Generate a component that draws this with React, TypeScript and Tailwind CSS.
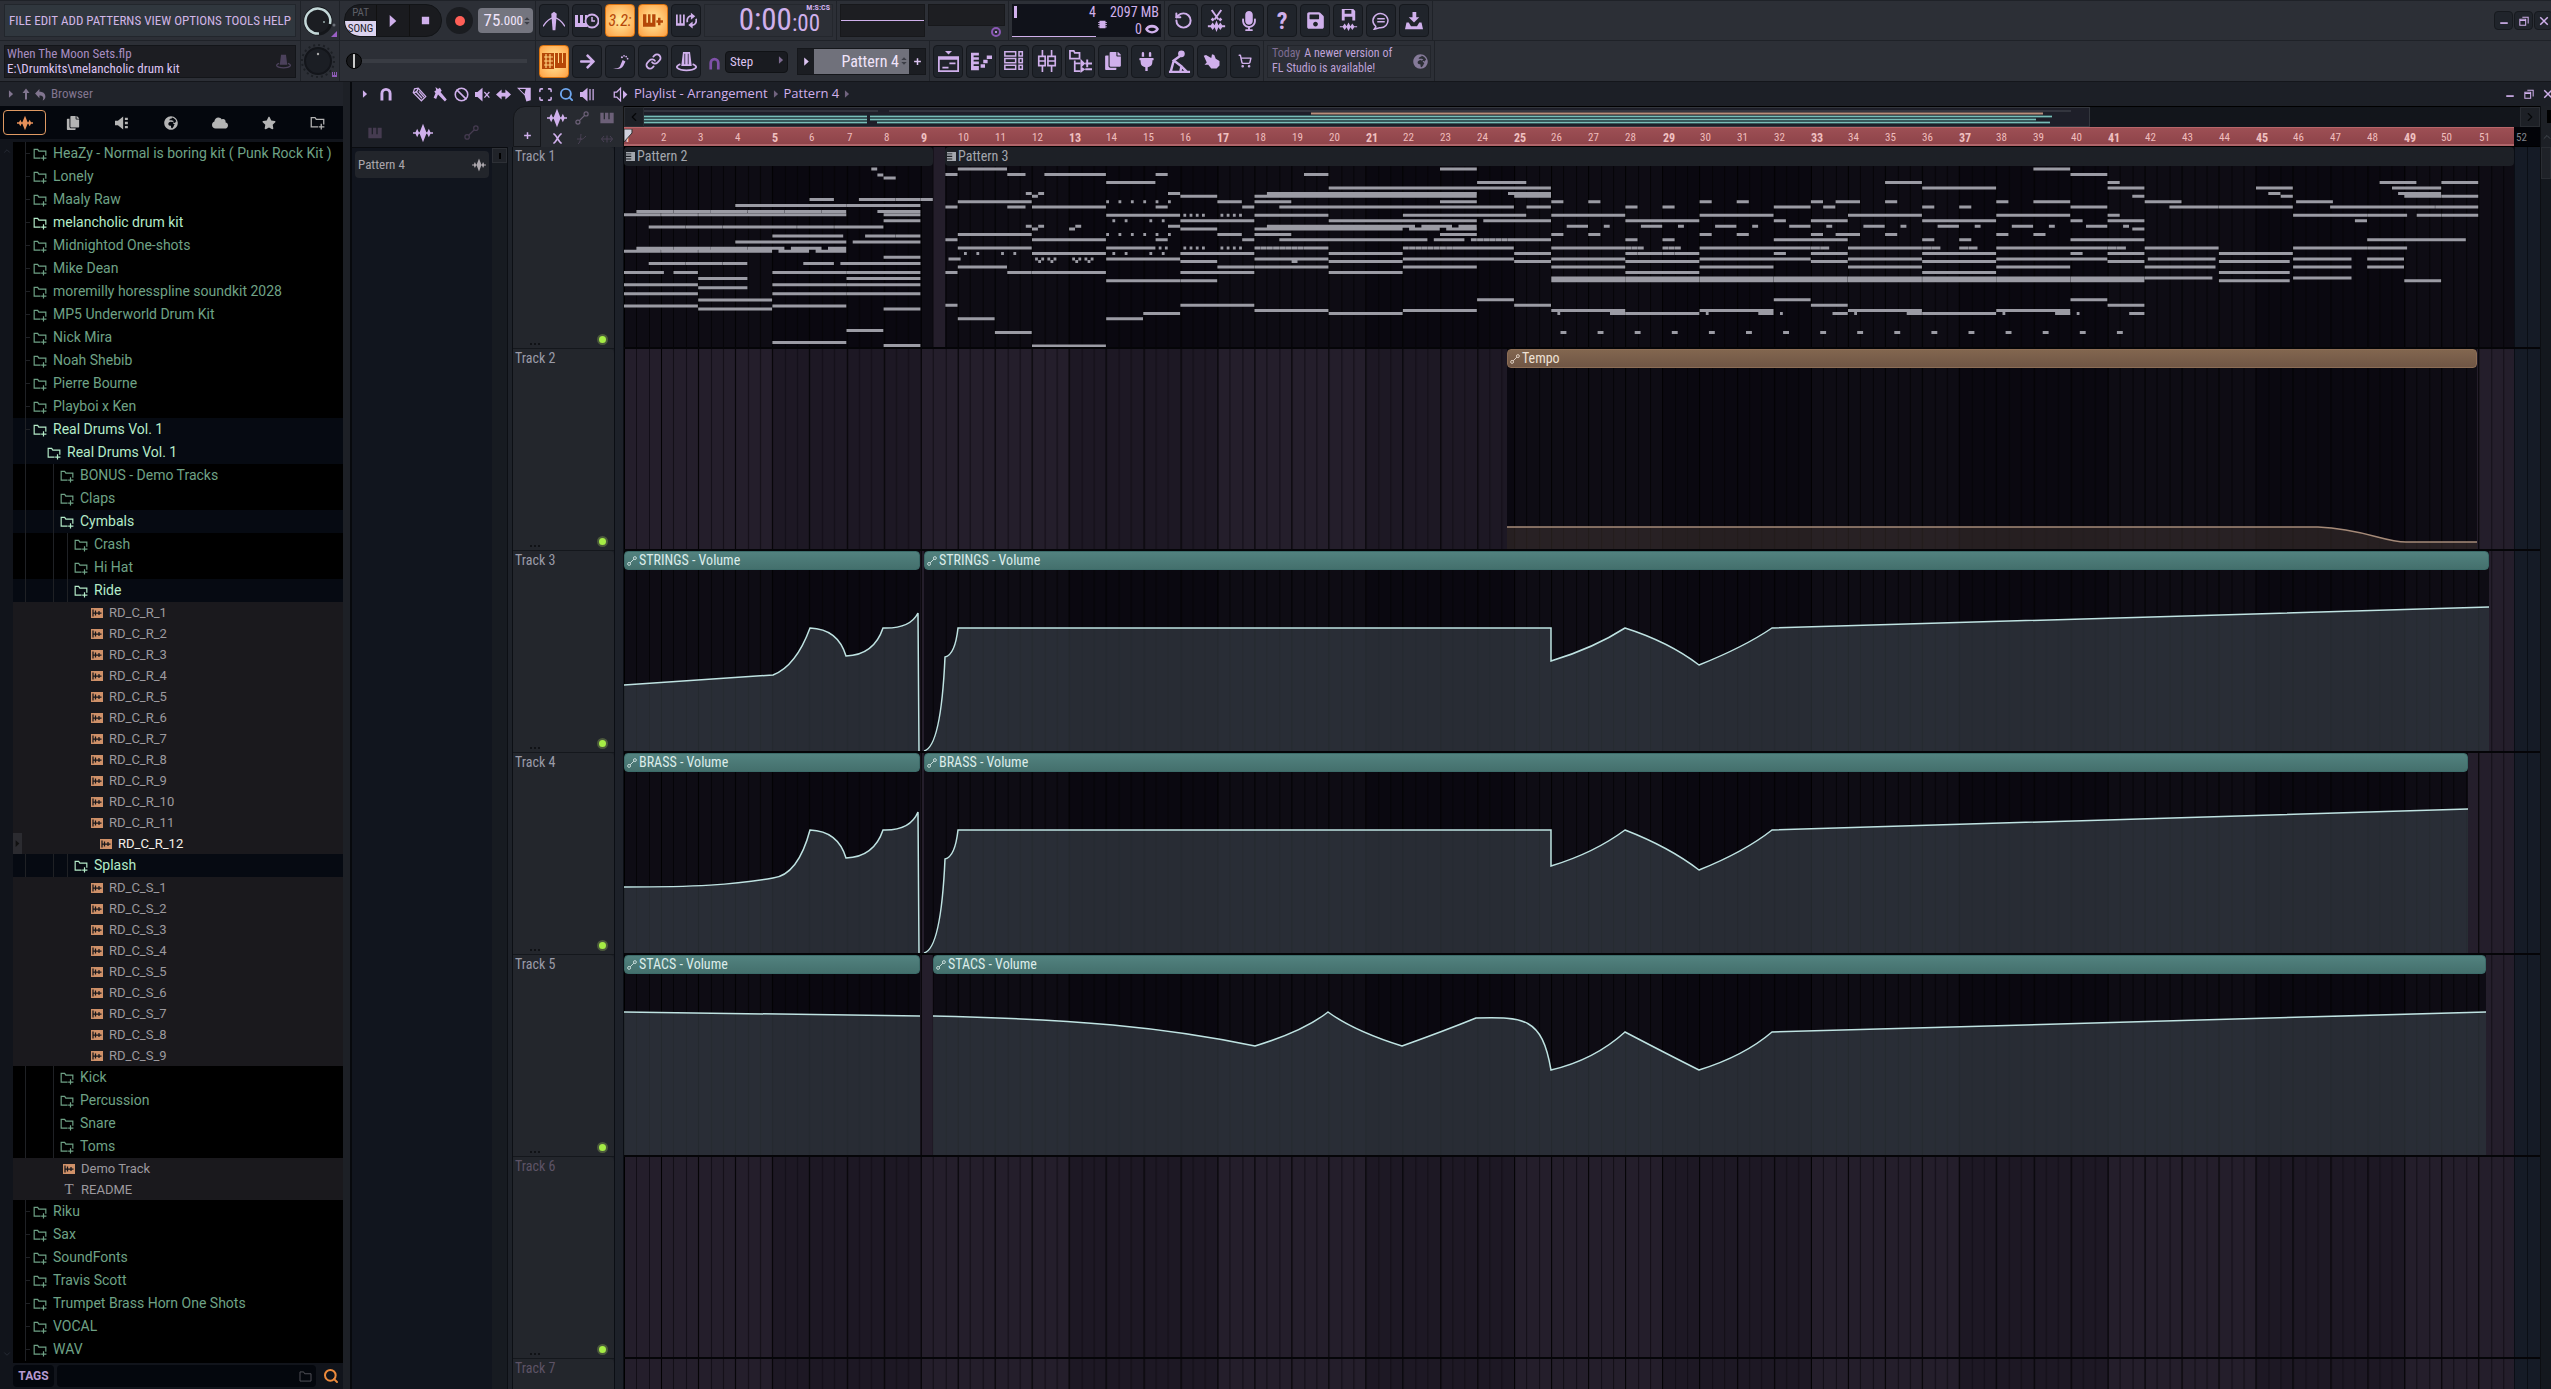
import type { ReactNode } from 'react';
import {
  Ban,
  ChevronDown,
  ChevronLeft,
  ChevronRight,
  ChevronUp,
  Link,
  RotateCcw,
  Scan,
  Search,
  ShoppingCart,
} from 'lucide-react';
import { FaArrowRight, FaCloud, FaGlobeAfrica, FaMicrophone, FaPlug, FaSave, FaStar, FaCopy } from 'react-icons/fa';

// Timeline geometry: one bar is 12 units wide, the song ends at bar 52
const BAR = 37.09;
const UNIT = BAR / 12;
const SONG_END = 1890;
const TRACK_HEIGHT = 202;

/* ---------- Icons ---------- */

const shapes: Record<string, ReactNode> = {
  piano: <path d="M2 4h5v10h2V4h5v10h2V4h6v16H2z" />,
  wave: <path d="M0 11h3l2-4 2 4h1l4-10 4 10h1l2-4 2 4h3v2h-3l-2 4-2-4h-1l-4 10-4-10H7l-2 4-2-4H0z" />,
  automation: (
    <g fill="none" stroke="currentColor" strokeWidth="2">
      <circle cx="5" cy="19" r="3.5" />
      <circle cx="19" cy="5" r="3.5" />
      <path d="M7.500 16.500l9-9" />
    </g>
  ),
  play: <path d="M7 3l10 9-10 9z" />,
  stop: <path d="M4 4h16v16H4z" />,
  metronome: (
    <>
      <path d="M9 4l3-2 3 2-1.500 18h-3z" />
      <path d="M0 18C3 13 6 9 12 8c6 1 9 5 12 10" fill="none" stroke="currentColor" strokeWidth="1.500" />
    </>
  ),
  pianoClock: (
    <>
      <path d="M0 6h3v8h2V6h3v8h2V6h2v12H0z" />
      <circle cx="17" cy="12" r="6.500" fill="#20242b" stroke="currentColor" strokeWidth="1.800" />
      <path d="M17 8v4h3" fill="none" stroke="currentColor" strokeWidth="1.500" />
    </>
  ),
  pianoPlus: <path d="M0 4h4v10h2V4h3v10h2V4h4v15H0zM18 8h3v3h3v3h-3v3h-3v-3h-2v-3h2z" />,
  pianoLoop: (
    <>
      <path d="M0 5h2v10h2V5h2v10h2V5h2v13H0z" />
      <path d="M13 14c-1-5 2-8 6-7M23 10c1 5-2 8-6 7" fill="none" stroke="currentColor" strokeWidth="2" />
      <path d="M17 3l5 4-5 4zM19 13l-5 4 5 4z" />
    </>
  ),
  stepPiano: (
    <>
      <path d="M0 4h12v16H0z" />
      <path d="M2 8h9M2 12h9M2 16h9M4 5v14M8 5v14" stroke="#ffcf7d" strokeWidth="1.200" />
      <path d="M13 4h3v10h1V4h3v10h1V4h3v15H13z" />
    </>
  ),
  slide: (
    <>
      <path d="M1 21c6 2 10 0 11-4l3-7 4 2-3 6c-3 5-9 6-15 3z" />
      <circle cx="14" cy="6" r="1.500" />
      <circle cx="17" cy="4" r="1.200" />
      <circle cx="20" cy="5" r="1.200" />
      <circle cx="22" cy="8" r="1.200" />
    </>
  ),
  hat: (
    <>
      <path d="M8 1h8l2 16H6z" />
      <path d="M10 3v12M14 3v12" stroke="#4c425c" strokeWidth="1.200" />
      <path d="M5 15c-8 3-3 7 7 7s15-4 7-7" fill="none" stroke="currentColor" strokeWidth="2" />
    </>
  ),
  magnet: (
    <path d="M5 23V11a7 7 0 0114 0v12" fill="none" stroke="currentColor" strokeWidth="5" />
  ),
  pencil: (
    <g fill="none" stroke="currentColor" strokeWidth="2">
      <path d="M2 9l2-6 6-1 12 13-7 7z" />
      <path d="M2 9c4 0 7-3 8-7M7 8l9 10M11 7l8 9" />
    </g>
  ),
  brush: <path d="M4 0l4 3 3-2 3 5-2 2 10 12-3 3L8 12l-3 7-4-2 3-7-2-3 3-2z" />,
  mute: (
    <>
      <path d="M0 8h4l8-7v22l-8-7H0z" />
      <path d="M15 8l8 9M23 8l-8 9" stroke="currentColor" strokeWidth="2" />
    </>
  ),
  slip: <path d="M0 12l9-8v5h6V4l9 8-9 8v-5H9v5z" />,
  slice: <path d="M0 1h22v20l-7 2-3-10zM4 3l8 8 2-8z" fillRule="evenodd" />,
  preview: <path d="M0 8h4l8-7v22l-8-7H0zM15 3h2v18h-2zM20 3h2v18h-2z" />,
  plugin: <path d="M0 8h5l9-7v22l-9-7H0zM17 3h5v4h-5zM17 10h5v4h-5zM17 17h5v4h-5z" />,
  speaker: (
    <>
      <path d="M2 8h4l6-6v20l-6-6H2z" fill="none" stroke="currentColor" strokeWidth="2" />
      <path d="M16 5l7 7-7 7z" />
    </>
  ),
  folderPlus: (
    <path d="M13 19H2V4h6l2 3h12v8M18 14v9M14 19h9" fill="none" stroke="currentColor" strokeWidth="2" />
  ),
  sample: (
    <>
      <path d="M0 2h24v20H0z" />
      <path d="M4 5v14M4 12h17M9 7v10M16 8v8" stroke="#17161b" strokeWidth="2.500" />
    </>
  ),
  cutWave: (
    <>
      <path d="M7 1l7 10M17 1l-7 10" stroke="currentColor" strokeWidth="2" />
      <path d="M3 17h3l2-3 2 3 2-5 2 5 2-3 2 3h3v2h-3l-2 3-2-3-2 5-2-5-2 3-2-3H3z" />
      <path d="M9 10l-2 2M15 10l2 2" stroke="currentColor" strokeWidth="3" />
    </>
  ),
  saveWave: (
    <>
      <path d="M5 0h12l2 2v10H5zM8 1v4h7V1zM8 8v4h8V8z" fillRule="evenodd" />
      <path d="M3 18h3l2-3 2 3 2-4 2 4 2-3 2 3h3v1h-3l-2 3-2-3-2 4-2-4-2 3-2-3H3z" />
    </>
  ),
  message: (
    <>
      <path d="M5 20l-2 3 7-2a10 9.500 0 10-5-2z" fill="none" stroke="currentColor" strokeWidth="2" />
      <path d="M7 9h10M7 13h10" stroke="currentColor" strokeWidth="2" />
    </>
  ),
  download: <path d="M10 0h5v7h4l-7 7-7-7h5zM2 14h3l3 5h8l3-5h3l2 9H0z" />,
  playlist: (
    <>
      <path d="M8 0h8l-4 4z" />
      <path d="M1 7h22v16H1z" fill="none" stroke="currentColor" strokeWidth="2" />
      <path d="M1 7h22v3H1zM13 13h7v2h-7zM5 18h7v2H5z" />
    </>
  ),
  pianoRoll: <path d="M0 2h9v3H3v2h6v3H3v2h6v3H3v2h6v5H0zM11 15h5v4h-5zM14 10h5v4h-5zM18 5h6v4h-6z" />,
  rack: (
    <g fill="none" stroke="currentColor" strokeWidth="1.800">
      <path d="M1 1h13v5H1zM1 9h13v5H1zM1 17h13v5H1zM18 1h4v5h-4zM18 9h4v5h-4zM18 17h4v5h-4z" />
    </g>
  ),
  mixer: (
    <g fill="none" stroke="currentColor" strokeWidth="1.800">
      <path d="M7 0v7M17 0v7M7 17v7M17 17v7M3 7h7v10H3zM13 7h8v10h-8zM3 12h7M13 12h8" />
    </g>
  ),
  tree: (
    <>
      <path d="M1 1h4l1 2h5v6H1zM6 11v11h6M6 14h6" fill="none" stroke="currentColor" strokeWidth="1.800" />
      <path d="M12 9v10l5-5zM12 17v7l5-4zM17 13h7v2h-7zM17 19h7v2h-7zM18 10h2v8h-2z" />
    </>
  ),
  lamp: (
    <>
      <circle cx="14" cy="4" r="3.500" />
      <path d="M13 6l-7 5 8 6-1 5M6 11l-3 11M1 23h22M14 17l6 6" fill="none" stroke="currentColor" strokeWidth="2.500" />
    </>
  ),
  hand: <path d="M1 5l3-1 7 4 1-5 3 1 2 5 5 3v6l-4 4-7 0-4-5-5 0 3-3z" />,
  mask: <path d="M0 12c4-10 20-10 24 0-4 10-20 10-24 0zm5 0c4 5 10 5 14 0-4-3-10-3-14 0z" fillRule="evenodd" />,
  chip: <path d="M4 2h16v20H4zM0 5h24v2H0zM0 11h24v2H0zM0 17h24v2H0z" />,
  restore: (
    <g fill="none" stroke="currentColor" strokeWidth="2.500">
      <path d="M2 8h14v14H2zM8 3h14v15M2 11h14" />
    </g>
  ),
  minimize: <path d="M3 15h18v4H3z" />,
  close: <path d="M3 3l18 18M21 3L3 21" stroke="currentColor" strokeWidth="3.500" />,
  plus: <path d="M12 3v18M3 12h18" stroke="currentColor" strokeWidth="4" />,
  up: <path d="M12 1l7 9h-5v13h-4V10H5z" />,
  undo: <path d="M10 2v5c8 0 11 4 11 9 0 3-2 6-5 7 3-6 0-9-6-9v5L2 10z" />,
  clip: <path d="M0 0h24v24H0v-4h14v-3H0v-4h14v-3H0V6h14V4H0z" />,
  curve: <path d="M4 22c6-4 5-14 6-20M2 12h10M9 13c5 0 8-4 11-7" fill="none" stroke="currentColor" strokeWidth="2" />,
  width: <path d="M1 12h22M6 6l-5 6 5 6M18 6l5 6-5 6M12 5v14" fill="none" stroke="currentColor" strokeWidth="2" />,
  crossed: <path d="M3 2c6 0 12 20 18 20M21 2C15 2 9 22 3 22" fill="none" stroke="currentColor" strokeWidth="3.500" />,
  spinner: <path d="M12 1l8 8H4zM12 23l8-8H4z" />,
};

const Icon = ({ name, className }: { name: string; className: string }) => (
  <svg viewBox="0 0 24 24" fill="currentColor" aria-hidden="true" className={`shrink-0 ${className}`}>
    {shapes[name]}
  </svg>
);

/* ---------- Top toolbar ---------- */

const menuItems = ['FILE', 'EDIT', 'ADD', 'PATTERNS', 'VIEW', 'OPTIONS', 'TOOLS', 'HELP'];

const ToolButton = ({ label, lit, children }: { label: string; lit?: boolean; children: ReactNode }) => (
  <button
    aria-label={label}
    className={`flex h-[33px] w-[30px] shrink-0 items-center justify-center rounded-sm border ${
      lit
        ? 'border-[#d9720f] bg-radial from-[#ffeb9e] to-[#ff9f3f] text-[#b54708]'
        : 'border-[#15181d] bg-[#20242b] text-[#d0b0ec]'
    }`}
  >
    {children}
  </button>
);

const Section = ({ className, children }: { className: string; children?: ReactNode }) => (
  <div className={`flex h-full shrink-0 items-center border-r border-[#1f2228] ${className}`}>{children}</div>
);

const Knob = ({ ring }: { ring?: boolean }) => (
  <svg viewBox="0 0 38 38" className="h-[38px] w-[38px]">
    {ring ? (
      <>
        <circle cx="17" cy="19" r="13" fill="#1b1d22" stroke="#14161a" strokeWidth="3" />
        <path d="M18 31.500A12.500 12.500 0 1129 22" fill="none" stroke="#c3d7d8" strokeWidth="2.500" />
        <circle cx="23" cy="20" r="1" fill="#9aa" />
        <circle cx="33" cy="23" r="1.500" fill="#6b7078" />
        <path d="M36 29v6h-6z" fill="#9a5fc4" />
      </>
    ) : (
      <>
        <circle cx="17" cy="19" r="16" fill="none" stroke="#1c1f24" strokeWidth="2" strokeDasharray="2 3" />
        <circle cx="17" cy="19" r="13" fill="#1b1e24" stroke="#13151a" strokeWidth="2" />
        <circle cx="17" cy="12" r="1.200" fill="#aaa" />
        <path d="M31 30h1v3h1v-3h1v3h1v-3h1v5h-5z" fill="#8d5ab5" />
      </>
    )}
  </svg>
);

const WindowButtons = () => (
  <div className="-mr-0.5 ml-auto flex gap-px text-[#d0b0ec]">
    {['minimize', 'restore', 'close'].map((name) => (
      <button
        key={name}
        aria-label={name}
        className="flex h-[19px] w-[19px] items-center justify-center rounded-sm border border-[#16191e] bg-[#20242b]"
      >
        <Icon name={name} className="size-[10px]" />
      </button>
    ))}
  </div>
);

const TopRow = () => (
  <div className="flex h-[41px] items-center border-t border-b border-[#1f2228]">
    <Section className="w-[301px] px-1">
      <nav className="flex h-[33px] w-full items-center justify-between border border-[#22262c] bg-[#30373e] px-1 text-[13px] text-[#d0b5e6]">
        {menuItems.map((item) => (
          <button key={item}>{item}</button>
        ))}
      </nav>
    </Section>
    <Section className="w-[39px]">
      <Knob ring />
    </Section>
    <Section className="w-[196px] pl-1">
      <div className="flex h-[33px] w-[98px] overflow-hidden rounded-2xl border border-[#121417] bg-[#1a1b1f]">
        <button className="flex w-[31px] flex-col text-center text-[11px] leading-4">
          <span className="text-[#5d5f66]">PAT</span>
          <span className="h-4 bg-[#dcd3ef] text-[#23222a]">SONG</span>
        </button>
        <button aria-label="Play" className="flex flex-1 items-center justify-center border-l border-[#111] text-[#d0b0ec]">
          <Icon name="play" className="size-[16px]" />
        </button>
        <button aria-label="Stop" className="flex flex-1 items-center justify-center border-l border-[#111] text-[#d0b0ec]">
          <Icon name="stop" className="size-[11px]" />
        </button>
      </div>
      <button aria-label="Record" className="ml-1 flex size-[27px] items-center justify-center rounded-full bg-[#1a1c20]">
        <span className="size-[10px] rounded-full bg-[#ff5f57]" />
      </button>
      <button className="ml-[5px] flex h-[25px] w-[55px] items-center justify-end rounded bg-[#74757f] pr-0.5 text-[#f0e4fa]">
        <span className="text-[17px]">75</span>
        <span className="text-[13px]">.000</span>
        <Icon name="spinner" className="size-[8px] text-[#3c3e46]" />
      </button>
    </Section>
    <Section className="gap-[3px] pr-[3px] pl-[3px]">
      <ToolButton label="Metronome"><Icon name="metronome" className="size-[22px]" /></ToolButton>
      <ToolButton label="Wait for input"><Icon name="pianoClock" className="size-[24px]" /></ToolButton>
      <ToolButton label="Countdown" lit>
        <span className="text-[16px] italic">3.2:</span>
      </ToolButton>
      <ToolButton label="Blend notes" lit><Icon name="pianoPlus" className="size-[20px]" /></ToolButton>
      <ToolButton label="Loop recording"><Icon name="pianoLoop" className="size-[21px]" /></ToolButton>
      <div className="flex h-[33px] w-[129px] items-end justify-end border border-[#24272d] bg-[#2c2f36] pr-[12px] text-[#d0b0ec]">
        <span className="text-[31px] leading-8">0:00</span>
        <div className="flex flex-col">
          <span className="-mr-[10px] text-right text-[8px] leading-2 font-bold">M:S:CS</span>
          <span className="text-[23px] leading-6">:00</span>
        </div>
      </div>
    </Section>
    <Section className="gap-[3px] px-[3px]">
      <div className="flex h-[33px] w-[85px] items-center border border-[#17181b] bg-[#1d1e22]">
        <div className="h-px w-full bg-[#d0b0ec]" />
      </div>
      <div className="flex h-[33px] w-[77px] flex-col items-end">
        <div className="h-[24px] w-full border border-[#17181b] bg-[#1d1e22]" />
        <span className="mt-px mr-1 flex size-[10px] items-center justify-center rounded-full border-2 border-[#8a58b4] bg-[#2b2e35]">
          <span className="size-0.5 bg-[#b98be0]" />
        </span>
      </div>
    </Section>
    <Section className="px-[3px]">
      <div className="flex h-[33px] w-[149px] bg-[#10121a] text-[14px] leading-4 text-[#d0b0ec]">
        <div className="flex w-[84px] flex-col justify-between border-b border-[#d0b0ec]">
          <div className="flex items-center justify-between pl-0.5">
            <span className="h-[12px] w-[3px] bg-[#d0b0ec]" />
            <span>4</span>
          </div>
        </div>
        <div className="flex flex-1 flex-col items-end pr-0.5">
          <span>2097 MB</span>
          <span className="flex w-full items-center gap-[3px]">
            <Icon name="chip" className="mr-auto mb-2 ml-0.5 size-[9px]" />0
            <Icon name="mask" className="size-[14px]" />
          </span>
        </div>
      </div>
    </Section>
    <Section className="gap-[3px] px-[3px]">
      <ToolButton label="Undo"><RotateCcw className="size-[19px]" strokeWidth={2.5} /></ToolButton>
      <ToolButton label="Cut"><Icon name="cutWave" className="size-[23px]" /></ToolButton>
      <ToolButton label="Record audio"><FaMicrophone className="size-[20px]" /></ToolButton>
      <ToolButton label="Help"><span className="text-[24px] font-bold leading-6">?</span></ToolButton>
      <ToolButton label="Save"><FaSave className="size-[19px]" /></ToolButton>
      <ToolButton label="Render"><Icon name="saveWave" className="size-[23px]" /></ToolButton>
      <ToolButton label="Feedback"><Icon name="message" className="size-[18px]" /></ToolButton>
      <ToolButton label="Download"><Icon name="download" className="size-[18px]" /></ToolButton>
    </Section>
    <WindowButtons />
  </div>
);

const BottomRow = () => (
  <div className="flex h-[41px] items-center border-b border-[#14161b]">
    <Section className="w-[301px] px-1">
      <div className="flex h-[33px] w-full items-center justify-between border border-[#131519] bg-[#1c1d22] pr-1 pl-0.5">
        <div className="text-[13px] leading-[15px]">
          <p className="text-[#a78cc0]">When The Moon Sets.flp</p>
          <p className="text-[#dcc4f2]">E:\Drumkits\melancholic drum kit</p>
        </div>
        <Icon name="hat" className="size-[15px] text-[#4c425c]" />
      </div>
    </Section>
    <Section className="w-[39px]">
      <Knob />
    </Section>
    <Section className="w-[196px] pr-2 pl-1.5">
      <input
        type="range"
        aria-label="Song position"
        defaultValue={0}
        className="h-4 w-full appearance-none bg-[linear-gradient(#393c43,#393c43)] bg-[length:100%_4px] bg-center bg-no-repeat [&::-webkit-slider-thumb]:size-4 [&::-webkit-slider-thumb]:appearance-none [&::-webkit-slider-thumb]:rounded-full [&::-webkit-slider-thumb]:border [&::-webkit-slider-thumb]:border-black [&::-webkit-slider-thumb]:bg-[linear-gradient(90deg,#17181b_44%,#ccc_44%,#ccc_56%,#17181b_56%)]"
      />
    </Section>
    <Section className="gap-[3px] pr-[3px] pl-[3px]">
      <ToolButton label="Typing keyboard" lit><Icon name="stepPiano" className="size-[24px]" /></ToolButton>
      <ToolButton label="Auto scroll"><FaArrowRight className="size-[17px]" /></ToolButton>
      <ToolButton label="Slide"><Icon name="slide" className="size-[17px]" /></ToolButton>
      <ToolButton label="Link"><Link className="size-[17px]" strokeWidth={2.5} /></ToolButton>
      <ToolButton label="Multilink"><Icon name="hat" className="size-[21px]" /></ToolButton>
      <Icon name="magnet" className="mt-1 ml-1 size-[13px] text-[#7f51a8]" />
      <div className="relative ml-px">
        <select aria-label="Snap" className="h-[22px] w-[63px] appearance-none rounded-sm border border-[#101215] bg-[#191b20] pl-1 text-[13px] text-[#dcc4f2]">
          <option>Step</option>
        </select>
        <Icon name="play" className="absolute top-1.5 right-0.5 size-[10px] text-[#7d6b91]" />
      </div>
      <div className="ml-1.5 flex h-[27px] border border-[#15171b] bg-[#1b1d22] text-[#dcc4f2]">
        <button aria-label="Pattern menu" className="flex w-[16px] items-center justify-center">
          <Icon name="play" className="size-[11px]" />
        </button>
        <div className="relative">
          <input
            aria-label="Pattern"
            defaultValue="Pattern 4"
            className="h-full w-[95px] bg-[#70717b] pr-2.5 text-right text-[16px] text-[#f0e4fa]"
          />
          <Icon name="spinner" className="absolute top-2 right-px size-[8px] text-[#3c3e46]" />
        </div>
        <button aria-label="Add pattern" className="flex w-[16px] items-center justify-center">
          <Icon name="plus" className="size-[9px]" />
        </button>
      </div>
    </Section>
    <Section className="gap-[3px] px-[3px]">
      <ToolButton label="Playlist"><Icon name="playlist" className="size-[21px]" /></ToolButton>
      <ToolButton label="Piano roll"><Icon name="pianoRoll" className="size-[21px]" /></ToolButton>
      <ToolButton label="Channel rack"><Icon name="rack" className="size-[20px]" /></ToolButton>
      <ToolButton label="Mixer"><Icon name="mixer" className="size-[22px]" /></ToolButton>
      <ToolButton label="Browser"><Icon name="tree" className="size-[23px]" /></ToolButton>
      <ToolButton label="Copy"><FaCopy className="size-[18px]" /></ToolButton>
      <ToolButton label="Plugins"><FaPlug className="size-[19px]" /></ToolButton>
      <ToolButton label="Tempo tapper"><Icon name="lamp" className="size-[23px]" /></ToolButton>
      <ToolButton label="Touch"><Icon name="hand" className="size-[18px]" /></ToolButton>
      <ToolButton label="Shop"><ShoppingCart className="size-[14px]" strokeWidth={2.5} /></ToolButton>
    </Section>
    <Section className="px-[3px]">
      <a href="#news" className="flex h-[33px] w-[164px] items-center justify-between border border-[#22252b] pr-0.5 pl-1 text-[12px] leading-[15px] text-[#bfa2d8]">
        <span>
          <span className="mr-1 text-[#7e6d92]">Today</span>A newer version of
          <br />
          FL Studio is available!
        </span>
        <FaGlobeAfrica className="size-[15px] text-[#857a99]" />
      </a>
    </Section>
  </div>
);

/* ---------- Browser ---------- */

type Row = { name: string; level: number; kind?: 'folder' | 'open' | 'sample' | 'text'; bright?: boolean };

const numbered = (prefix: string, from: number, to: number): Row[] =>
  Array.from({ length: to - from + 1 }, (_, i) => ({ name: `${prefix}${from + i}`, level: 4, kind: 'sample' }));

const rows: Row[] = [
  { name: 'HeaZy - Normal is boring kit ( Punk Rock Kit )', level: 0 },
  { name: 'Lonely', level: 0 },
  { name: 'Maaly Raw', level: 0 },
  { name: 'melancholic drum kit', level: 0, bright: true },
  { name: 'Midnightod One-shots', level: 0 },
  { name: 'Mike Dean', level: 0 },
  { name: 'moremilly horesspline soundkit 2028', level: 0 },
  { name: 'MP5 Underworld Drum Kit', level: 0 },
  { name: 'Nick Mira', level: 0 },
  { name: 'Noah Shebib', level: 0 },
  { name: 'Pierre Bourne', level: 0 },
  { name: 'Playboi x Ken', level: 0 },
  { name: 'Real Drums Vol. 1', level: 0, kind: 'open' },
  { name: 'Real Drums Vol. 1', level: 1, kind: 'open' },
  { name: 'BONUS - Demo Tracks', level: 2 },
  { name: 'Claps', level: 2 },
  { name: 'Cymbals', level: 2, kind: 'open' },
  { name: 'Crash', level: 3 },
  { name: 'Hi Hat', level: 3 },
  { name: 'Ride', level: 3, kind: 'open' },
  ...numbered('RD_C_R_', 1, 11),
  { name: 'RD_C_R_12', level: 4, kind: 'sample', bright: true },
  { name: 'Splash', level: 3, kind: 'open' },
  ...numbered('RD_C_S_', 1, 9),
  { name: 'Kick', level: 2 },
  { name: 'Percussion', level: 2 },
  { name: 'Snare', level: 2 },
  { name: 'Toms', level: 2 },
  { name: 'Demo Track', level: 2, kind: 'sample' },
  { name: 'README', level: 2, kind: 'text' },
  { name: 'Riku', level: 0 },
  { name: 'Sax', level: 0 },
  { name: 'SoundFonts', level: 0 },
  { name: 'Travis Scott', level: 0 },
  { name: 'Trumpet Brass Horn One Shots', level: 0 },
  { name: 'VOCAL', level: 0 },
  { name: 'WAV', level: 0 },
];

const folderIndent = ['pl-[3px]', 'pl-[17px]', 'pl-[30px]', 'pl-[44px]'];

const FolderRow = ({ row }: { row: Row }) => {
  const open = row.kind === 'open';
  return (
    <li className={`flex h-[23px] items-center text-[14px] ${open ? 'bg-[#060a12]' : 'bg-black'}`}>
      <span className="ml-3 h-full w-px bg-[#1f2125]" />
      <span className={`h-px w-[4px] ${row.level === 0 ? 'bg-[#1f2125]' : ''}`} />
      {row.level >= 2 && <span className="ml-[23px] -mr-[24px] h-full w-px bg-[#1f2125]" />}
      {row.level === 3 && <span className="ml-[37px] -mr-[38px] h-full w-px bg-[#1f2125]" />}
      <button
        className={`flex items-center gap-1.5 ${folderIndent[row.level]} ${
          open || row.bright ? 'text-[#b5ecc9]' : 'text-[#6fa286]'
        }`}
      >
        <Icon name="folderPlus" className="size-[14px]" />
        {row.name}
      </button>
    </li>
  );
};

const FileRow = ({ row }: { row: Row }) => {
  const selected = row.bright;
  return (
    <li className="flex h-[21px] items-center bg-[#1a191d]">
      <span className={`flex h-full w-[9px] items-center ${selected ? 'bg-[#2b2b30]' : ''}`}>
        {selected && <Icon name="play" className="size-[9px] text-[#111]" />}
      </span>
      <button
        className={`flex items-center gap-1.5 ${row.level === 2 ? 'pl-[41px]' : selected ? 'pl-[78px]' : 'pl-[69px]'} ${
          selected ? 'text-[#f4efe9]' : 'text-[#9d9a9f]'
        }`}
      >
        {row.kind === 'text' ? (
          <span className="w-[12px] text-center font-[family-name:'Liberation_Serif',serif] text-[15px]">T</span>
        ) : (
          <Icon name="sample" className="size-[12px] text-[#cf9068]" />
        )}
        {row.name}
      </button>
    </li>
  );
};

const Browser = () => (
  <aside className="flex w-[343px] shrink-0 flex-col bg-[#11141b]">
    <div className="flex h-[24px] shrink-0 items-center bg-[#20232a] pl-1.5 text-[13px] text-[#81758f]">
      <Icon name="play" className="size-[10px]" />
      <Icon name="up" className="ml-1 size-[12px]" />
      <Icon name="undo" className="ml-0.5 size-[13px]" />
      <span className="ml-1">Browser</span>
    </div>
    <div className="flex h-[33px] shrink-0 items-center bg-[#04070d] text-[#b4b4b4]">
      <button aria-label="All" className="ml-[3px] flex h-[25px] w-[43px] items-center justify-center rounded border border-[#e09a63] text-[#e8915a]">
        <Icon name="wave" className="size-[16px]" />
      </button>
      <button aria-label="Project" className="ml-0.5 flex w-[49px] justify-center"><FaCopy className="size-[14px]" /></button>
      <button aria-label="Plugins" className="flex w-[49px] justify-center"><Icon name="plugin" className="size-[14px]" /></button>
      <button aria-label="Online" className="flex w-[49px] justify-center"><FaGlobeAfrica className="size-[14px]" /></button>
      <button aria-label="Cloud" className="flex w-[49px] justify-center"><FaCloud className="size-[16px]" /></button>
      <button aria-label="Starred" className="flex w-[49px] justify-center"><FaStar className="size-[14px]" /></button>
      <button aria-label="Add folder" className="flex w-[49px] justify-center"><Icon name="folderPlus" className="size-[15px]" /></button>
    </div>
    <div className="mt-[3px] flex min-h-0 flex-1">
      <div className="flex w-[13px] shrink-0 flex-col items-center justify-between py-1 text-[#2a2f38]">
        <ChevronUp className="size-[10px]" />
        <ChevronDown className="size-[10px]" />
      </div>
      <ul className="min-w-0 flex-1 overflow-hidden bg-black font-[family-name:Roboto,sans-serif] text-[13px] whitespace-nowrap">
        {rows.map((row, i) =>
          row.kind === 'sample' || row.kind === 'text' ? <FileRow key={i} row={row} /> : <FolderRow key={i} row={row} />
        )}
      </ul>
    </div>
    <div className="flex h-[26px] shrink-0 items-center gap-[3px] pl-[13px]">
      <label htmlFor="tags" className="flex h-[22px] w-[41px] items-center justify-center rounded bg-[#04070d] font-[family-name:Roboto,sans-serif] text-[12px] font-bold text-[#b79ad2]">
        TAGS
      </label>
      <div className="relative flex-1">
        <input id="tags" className="block h-[22px] w-full rounded bg-[#04070d]" />
        <svg viewBox="0 0 14 12" className="absolute top-[6px] right-1 h-[11px] w-[13px]" fill="none" stroke="#55555c">
          <path d="M1 1h4l1 2h7v8H1z" />
        </svg>
      </div>
      <button aria-label="Search" className="flex w-[24px] justify-center text-[#ee8b3c]">
        <Search className="size-[16px]" strokeWidth={3} />
      </button>
    </div>
  </aside>
);

/* ---------- Playlist ---------- */

// Each line is one pitch: row number, then start-end pairs in timeline units
const pattern2Notes = `
0: 80-82
2: 82-84
3: 84-88
10: 60-68 76-88 88-96 96-100
12: 36-72 72-96
14: 4-16 16-28 28-40 40-52 52-64 64-72 82-96
15: 0-12 12-24 24-72 84-96
17: 84-96
19: 8-20 20-32 32-56 56-68 68-84
22: 48-71 78-88 88-96
24: 36-72 74-96
26: 4-16 16-28 28-40 40-52 54-64 66-72
27: 0-12 12-24 24-48 50-60 62-72
29: 84-96
31: 8-20 20-32 32-40 58-68 70-96
34: 0-13 16-24 48-72 72-96
36: 24-40 72-96
38: 0-24 48-72 72-96
39: 24-40
41: 0-24 48-72 72-96
43: 24-48
45: 0-24 48-72
46: 24-48 84-96
53: 72-84
57: 48-72
58: 84-96`;

const pattern3Notes = `
0: 108-124 264-276 456-468
2: 104-108 124-130 136-156 172-176 220-228 468-480
5: 156-172 276-292 408-420 480-484 568-580 588-600
7: 228-300 420-444 480-492 528-540 572-588
9: 130-132 134-136 176-180 208-276 286-300 532-536 574-588
10: 132-134 180-192 204-276 288-300 488-492 536-540 576-588 588-600
12: 108-132 156-157 160-161 164-165 168-169 172-173 176-177 192-200 204-216 264-276 300-304 312-316 348-352 360-364 384-388 392-400 408-412 444-448 456-468 492-504 541-553
14: 104-108 124-130 132-156 172-176 200-204 212-288 292-300 324-328 336-340 372-384 388-392 420-424 432-436 468-480 500-516 516-540 552-586 586-600
17: 156-180 181-182 183-184 185-186 187-188 193-194 195-196 197-198 199-200 204-228 252-292 300-324 348-372 396-420 444-468 480-484 540-564 564-577 580-588 588-600
19: 158-159 162-163 170-171 174-175 180-204 228-276 278-300 324-348 372-376 384-396 420-444 468-472 480-492 560-564
21: 130-132 134-136 146-148 176-180 208-256 258-268 270-276 305-312 317-319 329-336 341-343 353-360 365-367 377-384 389-391 401-408 413-415 425-432 437-439 449-456 461-463 473-480 485-487
22: 132-134 144-146 180-192 204-252 254-264 266-276 488-492
24: 108-132 156-157 160-161 164-165 168-169 172-173 176-177 192-200 204-216 264-276 300-304 312-316 348-352 360-364 384-388 392-400 408-412 444-448 456-460
26: 104-108 132-156 172-176 200-204 212-260 262-272 274-276 276-278 278-280 280-282 282-284 284-286 286-300 324-328 336-340 372-396 420-424 432-436 468-492 564-596
29: 108-132 156-172 173-174 175-176 181-182 183-184 185-186 187-188 193-194 195-196 197-198 199-200 204-206 206-208 208-210 210-212 212-214 214-216 216-218 218-220 220-228 252-254 254-256 256-258 258-260 260-262 262-264 264-266 266-268 268-288 300-324 324-326 326-328 328-330 336-338 338-340 340-342 348-384 384-387 387-390 396-420 420-423 423-426 432-435 435-438 444-480 480-483 483-486 492-516 540-564 564-577
31: 110-111 114-115 122-123 126-127 132-156 158-159 162-163 170-171 174-175 180-204 228-252 288-300 324-328 328-336 336-340 340-348 372-376 384-396 420-444 468-472 480-492 516-540
33: 105-109 133-134 135-136 137-138 139-140 145-146 147-148 149-150 151-152 156-180 204-228 252-288 300-324 348-384 396-420 444-480 493-515 540-559 564-576
34: 134-135 138-139 146-147 150-151 180-192 216-218 228-252 288-300 324-348 384-396 420-444 480-492 516-539
36: 108-124 192-204 204-228 252-276 300-324 348-372 396-420 444-468 492-515 540-559 564-576
38: 104-108 124-132 132-156 180-204 228-252 324-348 420-444 516-539
40: 300-324 324-348 348-372 372-396 396-420 420-444 444-468 468-492 492-514 540-559
41: 156-180 180-192 300-324 324-348 348-372 372-396 396-420 420-444 444-468 468-492 516-539 576-588
48: 276-288 372-384 468-480
50: 104-108 180-204 288-300 384-396 480-492
52: 204-228 252-276 300-324 348-372 396-420 444-468
53: 168-180 228-252 302-303 319-324 324-348 350-351 367-372 374-375 391-396 398-399 415-420 420-444 446-447 463-468 470-471 487-492
55: 108-120 156-168
60: 120-132 303-305 315-317 327-329 339-341 351-353 363-365 375-377 387-389 399-401 411-413 423-425 435-437 447-449 459-461 471-473 483-485
65: 132-156`;

const notesToPath = (notes: string, pitchHeight: number) =>
  notes
    .trim()
    .split('\n')
    .flatMap((line) => {
      const [pitch, spans] = line.split(': ');
      const y = (20.5 + Number(pitch) * pitchHeight).toFixed(1);
      return spans.split(' ').map((span) => {
        const [from, to] = span.split('-').map(Number);
        return `M${(from * UNIT).toFixed(1)} ${y}h${((to - from) * UNIT - 0.3).toFixed(1)}v3h-${((to - from) * UNIT - 0.3).toFixed(1)}z`;
      });
    })
    .join('');

type Clip = {
  name: string;
  start: number;
  end: number;
  tone: 'pattern' | 'tempo' | 'volume';
  notes?: string;
  curve?: string;
};

// Curves are drawn in track space: x from bar 1, y from the top of the track
const outro = (low: number) =>
  `V${low}Q970 ${low - 13} 1001 77Q1045 ${low - 19} 1075 ${low + 4}Q1120 ${low - 14} 1148 77`;

const tracks: { name: string; dim?: boolean; clips: Clip[] }[] = [
  {
    name: 'Track 1',
    clips: [
      { name: 'Pattern 2', start: 0, end: 309, tone: 'pattern', notes: notesToPath(pattern2Notes, 3.045) },
      { name: 'Pattern 3', start: 321, end: 1890, tone: 'pattern', notes: notesToPath(pattern3Notes, 2.724) },
    ],
  },
  {
    name: 'Track 2',
    clips: [{ name: 'Tempo', start: 883, end: 1853, tone: 'tempo', curve: 'M883 178H1694C1740 180 1760 193 1782 193H1853' }],
  },
  {
    name: 'Track 3',
    clips: [
      {
        name: 'STRINGS - Volume',
        start: 0,
        end: 296,
        tone: 'volume',
        curve: 'M0 134L149 124Q172 115 186 77Q214 78 222 105Q250 104 259 77Q286 78 294 62L295 200',
      },
      {
        name: 'STRINGS - Volume',
        start: 300,
        end: 1865,
        tone: 'volume',
        curve: `M300 200Q317 196 321 106Q331 104 334 77H927${outro(110)}L1865 56`,
      },
    ],
  },
  {
    name: 'Track 4',
    clips: [
      {
        name: 'BRASS - Volume',
        start: 0,
        end: 296,
        tone: 'volume',
        curve: 'M0 134C70 134 110 132 149 125Q174 122 186 77Q214 78 222 105Q250 104 259 77Q286 78 294 59L295 200',
      },
      {
        name: 'BRASS - Volume',
        start: 300,
        end: 1844,
        tone: 'volume',
        curve: `M300 200Q317 196 321 106Q331 104 334 77H927${outro(113)}L1844 56`,
      },
    ],
  },
  {
    name: 'Track 5',
    clips: [
      { name: 'STACS - Volume', start: 0, end: 296, tone: 'volume', curve: 'M0 57L296 61' },
      {
        name: 'STACS - Volume',
        start: 309,
        end: 1862,
        tone: 'volume',
        curve:
          'M309 61C450 64 540 72 631 91Q680 76 704 57Q730 76 778 91Q820 76 852 63C900 62 918 62 927 115Q970 105 1001 77Q1045 100 1075 115Q1120 101 1148 77L1862 57',
      },
    ],
  },
  { name: 'Track 6', dim: true, clips: [] },
  { name: 'Track 7', dim: true, clips: [] },
];

const headerTone = {
  pattern: 'bg-[#1d2026] text-[#a3a7ae]',
  tempo: 'bg-linear-to-b from-[#82664f] to-[#705645] border border-[#8c6d55] text-[#efe2d6]',
  volume: 'bg-linear-to-b from-[#52827f] to-[#44706d] border border-[#3c6b69] text-[#dcecea]',
};

const GridPatterns = () => {
  const lines = Array.from({ length: 24 }, (_, i) => i);
  const grid = (id: string, light: string, dark: string, line: string) => (
    <pattern id={id} width={BAR * 8} height="400" patternUnits="userSpaceOnUse">
      <rect width={BAR * 4} height="400" fill={light} />
      <rect x={BAR * 4} width={BAR * 4} height="400" fill={dark} />
      {lines.map((i) => (
        <rect key={i} x={Math.round((i * BAR) / 3)} width="1" height="400" fill={i % 3 === 0 ? '#000' : line} />
      ))}
    </pattern>
  );
  return (
    <svg className="absolute size-0" aria-hidden="true">
      <defs>
        {grid('grid-empty', '#241e2b', '#1d1824', '#110d15')}
        {grid('grid-clip', '#0e0c14', '#0a0810', '#040306')}
      </defs>
    </svg>
  );
};

const Lane = ({ clips }: { clips: Clip[] }) => (
  <div className="relative min-w-0 flex-1 overflow-hidden bg-[#151b26]">
    <svg className="absolute inset-0 size-full">
      <rect width={SONG_END} height={TRACK_HEIGHT} fill="url(#grid-empty)" />
      <path d={`M${SONG_END + 0.5} 0v202M${SONG_END + 13.5} 0v202`} stroke="#0a0e15" />
      {clips.map((clip) => (
        <g key={clip.start}>
          <rect x={clip.start} width={clip.end - clip.start} height={TRACK_HEIGHT} fill="url(#grid-clip)" />
          {clip.notes && <path d={clip.notes} fill="#9b9ba4" />}
          {clip.curve && (
            <>
              <path
                d={`${clip.curve}V201H${clip.start}z`}
                fill={clip.tone === 'tempo' ? '#4a3b38' : '#3c454c'}
                fillOpacity={clip.tone === 'tempo' ? 0.45 : 0.6}
              />
              <path d={clip.curve} fill="none" stroke={clip.tone === 'tempo' ? '#a58a78' : '#bfe3e2'} strokeWidth="1.5" />
            </>
          )}
        </g>
      ))}
      <rect y="200" width="100%" height="2" fill="#050508" />
    </svg>
    {clips.map((clip) => (
      <div
        key={clip.start}
        className={`absolute top-0 flex h-[19px] items-center gap-0.5 overflow-hidden rounded-sm pl-0.5 text-[14px] ${headerTone[clip.tone]}`}
        style={{ left: clip.start, width: clip.end - clip.start }}
      >
        <Icon name={clip.tone === 'pattern' ? 'clip' : 'automation'} className={clip.tone === 'pattern' ? 'size-[9px]' : 'size-[10px]'} />
        {clip.name}
      </div>
    ))}
  </div>
);

const Track = ({ name, dim, clips }: { name: string; dim?: boolean; clips: Clip[] }) => (
  <div className="flex h-[202px] shrink-0">
    <div className="flex w-[101px] shrink-0 flex-col justify-between rounded-tr border-b border-[#14171c] bg-[#23262c] pl-0.5">
      <span className={`text-[14px] leading-[18px] ${dim ? 'text-[#5d5366]' : 'text-[#9a9ba8]'}`}>{name}</span>
      <div className="flex items-center justify-between pr-[6px] pb-[3px] pl-[15px]">
        <span className="mt-2 flex gap-0.5">
          <span className="size-0.5 bg-[#101216]" />
          <span className="size-0.5 bg-[#101216]" />
          <span className="size-0.5 bg-[#101216]" />
        </span>
        <button aria-label={`Mute ${name}`} className="size-[11px] rounded-full border-2 border-[#4c5a3c] bg-[#a5ec45]" />
      </div>
    </div>
    <div className="w-[10px] shrink-0 border-x border-[#0b0e14] bg-[#1d2129]" />
    <Lane clips={clips} />
  </div>
);

const playlistTools = ['pencil', 'brush', 'ban', 'mute', 'slip', 'slice', 'scan', 'zoom', 'preview'];

const PlaylistTitle = () => (
  <div className="flex h-[24px] shrink-0 items-center bg-[#1c1f26] pl-2 text-[#d0b0ec]">
    <Icon name="play" className="size-[10px]" />
    <Icon name="magnet" className="ml-[9px] size-[14px]" />
    <div className="ml-[16px] flex items-center">
      {playlistTools.map((tool) => (
        <button key={tool} aria-label={tool} className="flex w-[21px] justify-center">
          {tool === 'ban' && <Ban className="size-[15px]" strokeWidth={2.5} />}
          {tool === 'scan' && <Scan className="size-[15px]" strokeWidth={2.5} />}
          {tool === 'zoom' && <Search className="size-[15px] text-[#6fa8f0]" strokeWidth={3} />}
          {shapes[tool] && <Icon name={tool} className="size-[15px]" />}
        </button>
      ))}
    </div>
    <Icon name="speaker" className="ml-[15px] size-[15px]" />
    <h1 className="ml-1.5 flex items-center font-[family-name:'Open_Sans',sans-serif] text-[13px]">
      Playlist - Arrangement
      <Icon name="play" className="mx-[3px] size-[10px] text-[#71637f]" />
      Pattern 4
      <Icon name="play" className="mx-[3px] size-[10px] text-[#71637f]" />
    </h1>
    <div className="-mr-0.5 ml-auto flex gap-[9px]">
      <Icon name="minimize" className="size-[10px]" />
      <Icon name="restore" className="size-[10px]" />
      <Icon name="close" className="size-[10px]" />
    </div>
  </div>
);

const Overview = () => (
  <div className="flex h-[20px] bg-[#12151b]">
    <button aria-label="Scroll left" className="flex w-[20px] items-center justify-center border border-[#2a2d33] bg-[#1d2026] text-[#050608]">
      <ChevronLeft className="size-[14px]" />
    </button>
    <svg className="h-full w-[1446px] bg-[#1e1f29]">
      <path d="M0 .5h1446M0 19.500h1446M1445.500 0v20" stroke="#34373e" />
      <path d="M0 4h234M245 4h1182" stroke="#33353e" strokeWidth="2" />
      <path d="M667 6.500h732" stroke="#b88f7c" strokeWidth="2" />
      <path d="M0 9.500h223M226 9.500h1182M0 12.500h223M226 12.500h1166M0 15.500h223M233 15.500h1173" stroke="#38585b" strokeWidth="3" />
      <path d="M0 9.500h223M226 9.500h1182M0 12.500h223M226 12.500h1166M0 15.500h223M233 15.500h1173" stroke="#78bdb8" />
    </svg>
    <button aria-label="Scroll right" className="ml-auto flex w-[20px] items-center justify-center border border-[#2a2d33] bg-[#1d2026] text-[#050608]">
      <ChevronRight className="size-[14px]" />
    </button>
  </div>
);

const Ruler = () => (
  <div className="relative h-[20px] overflow-hidden bg-[#020308]">
    <div
      className="h-full border-t border-b-2 border-t-[#b8666a] border-b-[#b0656a] bg-linear-to-b from-[#9d4f54] to-[#8e444a]"
      style={{ width: SONG_END }}
    />
    {Array.from({ length: 52 }, (_, i) => (
      <span
        key={i}
        className={`absolute top-[3px] leading-4 ${
          i === 51 ? 'text-[11px] text-[#80858c]' : i % 4 === 0 ? 'text-[12px] font-bold text-[#f0c0c0]' : 'text-[11px] text-[#f0bdbd]'
        }`}
        style={{ left: Math.round(i * BAR) }}
      >
        {i + 1}
      </span>
    ))}
    <svg viewBox="0 0 9 14" className="absolute top-0.5 left-0 h-[14px] w-[9px]">
      <path d="M0 0h8v4L0 13z" fill="#cfd0dc" stroke="#333" />
    </svg>
  </div>
);

const Playlist = () => (
  <main className="flex min-w-0 flex-1 flex-col bg-[#1c1f26]">
    <PlaylistTitle />
    <div className="flex h-[41px] shrink-0">
      <div className="flex w-[161px] shrink-0 items-center pt-3 pl-[15px] text-[#453b50]">
        <Icon name="piano" className="size-[16px]" />
        <Icon name="wave" className="ml-[30px] size-[20px] text-[#d0b0ec]" />
        <Icon name="automation" className="ml-[31px] size-[15px]" />
      </div>
      <button aria-label="Add track" className="flex w-[28px] shrink-0 items-end justify-center rounded-tl-xl border border-[#14161a] bg-[#272a30] pb-[6px] text-[#d0b0ec]">
        <Icon name="plus" className="size-[9px]" />
      </button>
      <div className="grid w-[83px] shrink-0 grid-cols-3 place-items-center border-r border-[#111] bg-[#272a30] px-1 text-[#4a4155]">
        <Icon name="wave" className="size-[20px] text-[#d0b0ec]" />
        <Icon name="automation" className="size-[14px] text-[#6c6078]" />
        <Icon name="piano" className="size-[16px] text-[#6c6078]" />
        <Icon name="crossed" className="size-[11px] text-[#d0b0ec]" />
        <Icon name="curve" className="size-[12px]" />
        <Icon name="width" className="size-[12px]" />
      </div>
      <div className="flex min-w-0 flex-1 flex-col justify-between border-t border-b border-black">
        <Overview />
        <Ruler />
      </div>
      <div className="flex w-[11px] shrink-0 flex-col border-l border-[#0c0e12] bg-[#1d2026]">
        <span className="mt-1 ml-1.5 h-[13px] bg-black" />
        <ChevronUp className="mt-2 size-[12px] text-[#444950]" />
      </div>
    </div>
    <div className="flex min-h-0 flex-1 overflow-hidden">
      <div className="flex w-[155px] shrink-0 border-t border-[#0a0c10] bg-[#11151e]">
        <div className="flex-1 p-[3px]">
          <button className="flex h-[27px] w-full items-center justify-between rounded-sm bg-[#22252b] px-[3px] text-[13px] text-[#aba6ac]">
            Pattern 4
            <Icon name="wave" className="size-[14px]" />
          </button>
        </div>
        <div className="w-[15px] bg-[#171b21]">
          <div className="flex h-[15px] items-center justify-center border border-[#2d3036] bg-[#202329]">
            <span className="h-1.5 w-0.5 bg-black" />
          </div>
        </div>
      </div>
      <div className="w-[6px] shrink-0 border-x border-[#0c0f14] bg-[#1e2229]" />
      <div className="flex min-w-0 flex-1 flex-col">
        {tracks.map((track) => (
          <Track key={track.name} {...track} />
        ))}
      </div>
      <div className="w-[11px] shrink-0 border-l border-[#0c0e12] bg-[#14181e]">
        <div className="h-[32px] border border-[#2a2d33] bg-[#1f2228]" />
      </div>
    </div>
  </main>
);

const App = () => (
  <div className="flex h-screen flex-col overflow-hidden bg-[#2c2f36] font-[family-name:'Liberation_Sans_Narrow','Roboto_Condensed','Open_Sans_Condensed',Roboto,sans-serif]">
    <GridPatterns />
    <header className="shrink-0">
      <TopRow />
      <BottomRow />
    </header>
    <div className="flex min-h-0 flex-1">
      <Browser />
      <div className="flex w-[9px] shrink-0 items-center border-r-2 border-[#07090d] bg-[#1d2026]" />
      <Playlist />
    </div>
  </div>
);

export default App;
